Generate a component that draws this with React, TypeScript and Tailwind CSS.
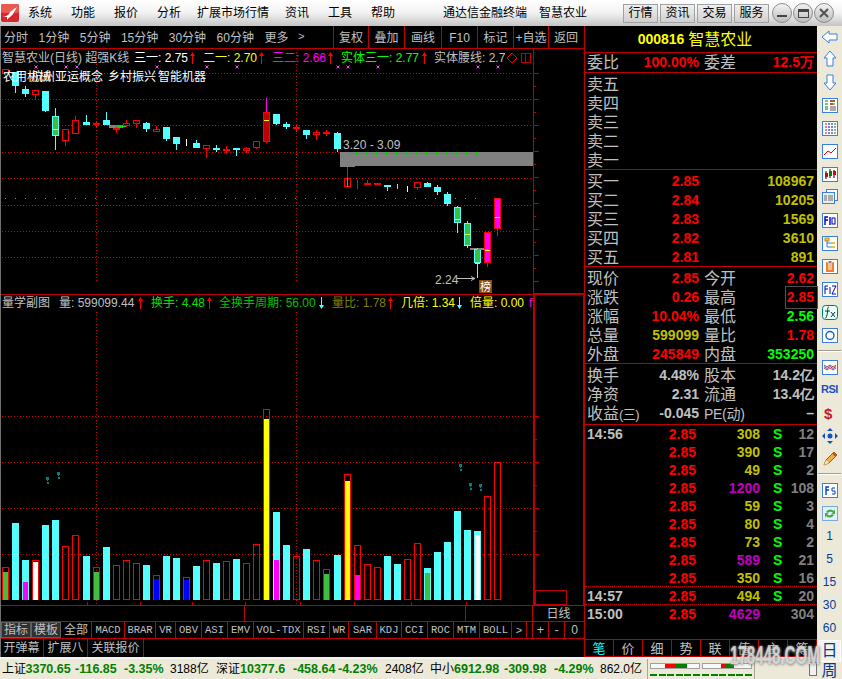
import React from "react";

const RED = "#ff0000";
const LINE = "#c00000";
const CYAN = "#54ffff";

type Candle = [string, number, number, number?, number?, number?];
// kind, bodyTop, bodyBottom, wickTop, wickBottom, mark
const candles: Candle[] = [
  ["r", 69, 74, 69, 77],
  ["c", 72, 86, 72, 93],
  ["c", 89, 94, 86, 97],
  ["r", 90, 95, 90, 99],
  ["c", 91, 111, 91, 112],
  ["g", 116, 136, 108, 150, 129],
  ["r", 129, 141, 129, 146],
  ["r", 120, 134, 116, 134],
  ["c", 122, 125, 115, 125],
  ["x", 123, 125, 121, 128],
  ["c", 120, 125, 112, 125],
  ["x", 128, 130, 127, 133],
  ["r", 123, 126, 120, 127],
  ["r", 120, 124, 120, 128],
  ["c", 123, 129, 122, 132],
  ["r", 129, 132, 126, 132],
  ["c", 127, 139, 127, 141],
  ["c", 137, 144, 137, 150],
  ["w", 143, 144, 139, 146],
  ["c", 143, 148, 140, 148],
  ["r", 145, 149, 145, 158],
  ["c", 148, 150, 145, 152],
  ["x", 149, 151, 146, 154],
  ["c", 148, 150, 148, 156],
  ["r", 148, 151, 147, 153],
  ["r", 141, 148, 141, 149],
  ["d", 112, 142, 98, 143, 120],
  ["c", 114, 124, 114, 125],
  ["c", 124, 127, 122, 129],
  ["x", 127, 129, 124, 132],
  ["c", 130, 135, 130, 139],
  ["r", 132, 135, 130, 140],
  ["x", 132, 134, 130, 136],
  ["c", 133, 149, 132, 152],
  ["r", 178, 187, 167, 187],
  ["x", 182, 183, 180, 189],
  ["r", 183, 185, 180, 185],
  ["r", 183, 185, 183, 185],
  ["c", 185, 187, 185, 191],
  ["c", 186, 187, 184, 189],
  ["w", 187, 188, 186, 192],
  ["r", 182, 188, 182, 190],
  ["c", 183, 187, 182, 187],
  ["c", 187, 192, 185, 195],
  ["c", 194, 204, 192, 206],
  ["g", 207, 223, 206, 233, 219],
  ["g", 223, 246, 221, 248, 234],
  ["g", 249, 263, 248, 278, 263],
  ["m", 232, 263, 232, 267, 250],
  ["m", 198, 229, 198, 236, 217],
];

// kind, top, innerTop, innerColor
type Bar = [string, number, number?, string?];
const bars: Bar[] = [
  ["r", 567, 572, "#3fbf3f"], ["c", 523], ["c", 560, 582, "#ff00ff"], ["r", 560, 562, "#ffffff"], ["c", 525], ["c", 520],
  ["r", 546], ["r", 535], ["c", 556], ["r", 567, 572, "#3fbf3f"], ["c", 547], ["r", 565], ["r", 560], ["r", 563],
  ["c", 565], ["r", 575, 579, "#0000ff"], ["c", 556], ["c", 558], ["r", 577, 580, "#0000ff"], ["c", 566], ["r", 560],
  ["c", 563], ["r", 561], ["c", 559], ["r", 563], ["r", 544], ["r", 409, 419, "#ffff00"], ["c", 512, 560, "#ff00ff"],
  ["c", 545], ["r", 556], ["c", 549], ["r", 560], ["r", 569, 574, "#3fbf3f"], ["c", 555], ["r", 474, 481, "#ffff00"],
  ["r", 545, 575, "#ff00ff"], ["r", 564], ["r", 567], ["c", 556], ["c", 564], ["r", 559], ["r", 543],
  ["c", 568, 573, "#3fbf3f"], ["c", 552], ["c", 542], ["c", 511], ["c", 530], ["c", 531, 535, "#ffffff"], ["r", 496], ["r", 462],
];

const cx = (i: number) => Math.floor(5.7 + 10.04 * i);

function Chart() {
  const hDots = [73, 99, 125, 152, 178, 205, 231, 257, 416, 462, 508, 554];
  const xMarks = [36, 66, 77, 157, 207, 237, 338, 348, 378, 478, 498];
  const upperTicks = Array.from({ length: 17 }, (_, k) => 73 + k * 13);
  const lowerTicks = Array.from({ length: 7 }, (_, k) => 416 + k * 23);
  return (
    <svg width={585} height={556} viewBox="0 49 585 556" className="block" shapeRendering="crispEdges">
      {hDots.map((y) => (
        <line key={y} x1={2} x2={533} y1={y + 0.5} y2={y + 0.5} stroke="#d80000" strokeDasharray="1 2" />
      ))}
      {[96, 296].map((x) => (
        <g key={x}>
          <line x1={x + 0.5} x2={x + 0.5} y1={52} y2={283} stroke="#d80000" strokeDasharray="1 2" />
          <line x1={x + 0.5} x2={x + 0.5} y1={312} y2={604} stroke="#d80000" strokeDasharray="1 2" />
        </g>
      ))}
      {Array.from({ length: 48 }, (_, k) => (
        <rect key={k} x={5 + k * 10} y={198} width={1} height={1} fill="#e06a4a" />
      ))}
      {/* grey band */}
      <rect x={340} y={152} width={193} height={14} fill="#808080" />
      <rect x={340} y={166} width={15} height={1} fill="#808080" />
      <rect x={470} y={248} width={18} height={2} fill="#808080" />
      <rect x={109} y={125} width={14} height={3} fill="#808080" />
      <rect x={348} y={153} width={129} height={1} fill="#00d000" />
      {Array.from({ length: 13 }, (_, k) => (
        <rect key={k} x={356 + k * 10} y={152} width={1} height={3} fill="#00d000" />
      ))}
      <rect x={117} y={126} width={10} height={1} fill="#00e000" />
      {candles.map(([k, t, b, wt, wb, m], i) => {
        const c = cx(i);
        const wick = k === "c" || k === "g" ? CYAN : k === "w" ? "#fff" : RED;
        const fill =
          k === "c" ? CYAN : k === "g" ? "#3fbf3f" : k === "m" ? "#ff00ff" : k === "d" ? "#c00000" : k === "x" ? RED : k === "w" ? "#fff" : "#000";
        const stroke = k === "g" ? CYAN : k === "c" ? CYAN : k === "w" ? "#fff" : RED;
        return (
          <g key={i}>
            <rect x={c} y={wt} width={1} height={(wb as number) - (wt as number)} fill={wick} />
            {k === "d" && <rect x={c} y={wt} width={1} height={t - (wt as number)} fill="#ff00ff" />}
            <rect x={c - 3 + 0.5} y={t + 0.5} width={6} height={Math.max(b - t - 1, 0)} fill={fill} stroke={stroke} />
            {m !== undefined && <rect x={c - 2} y={m} width={5} height={1} fill="#ffff00" />}
          </g>
        );
      })}
      <rect x={347} y={178} width={1} height={9} fill="#00e000" />
      <rect x={477} y={249} width={11} height={1} fill="#00e000" />
      {xMarks.map((x) => (
        <path key={x} d={`M${x - 1.5} 65.5l3 3m0 -3l-3 3`} stroke="#ff40ff" fill="none" shapeRendering="auto" />
      ))}
      <text x={343} y={149} fill="#c0c0c0" fontSize={12} fontFamily="Liberation Sans" shapeRendering="auto">3.20 - 3.09</text>
      <text x={435} y={284} fill="#c0c0c0" fontSize={12} fontFamily="Liberation Sans">2.24</text>
      <path d="M457 278.5h18m-4 -2l4 2l-4 2" stroke="#c0c0c0" fill="none" shapeRendering="auto" />
      <rect x={479} y={280} width={13} height={13} fill="#8b4a14" />
      <text x={480} y={291} fill="#fff" fontSize={11} fontFamily="Noto Sans CJK SC">榜</text>

      {/* divider and side axis */}
      <rect x={0} y={294} width={585} height={1} fill={LINE} />
      <rect x={533} y={49} width={1} height={246} fill={LINE} />
      <rect x={533} y={295} width={2} height={310} fill={LINE} />
      <rect x={534} y={293} width={51} height={2} fill={LINE} />
      <rect x={583} y={295} width={1} height={310} fill={LINE} />
      {upperTicks.map((y, k) => (
        <rect key={y} x={534} y={y} width={k % 2 ? 2 : 5} height={1} fill={LINE} />
      ))}
      {lowerTicks.map((y, k) => (
        <rect key={y} x={535} y={y} width={k % 2 ? 2 : 4} height={1} fill={LINE} />
      ))}
      <rect x={535.5} y={590.5} width={31} height={14} fill="none" stroke={LINE} />

      {/* volume */}
      {bars.map(([k, t, it, ic], i) => {
        const c = cx(i);
        return (
          <g key={i}>
            {k === "c" ? (
              <rect x={c - 3} y={t} width={7} height={600 - t} fill={CYAN} />
            ) : (
              <rect x={c - 2.5} y={t + 0.5} width={6} height={599 - t} fill="none" stroke={RED} />
            )}
            {it !== undefined && <rect x={c - 2} y={it} width={5} height={600 - it} fill={ic} />}
          </g>
        );
      })}
      {[[47, 477], [58, 472], [460, 464], [470, 483], [480, 484]].map(([x, y]) => (
        <g key={x} fill="#008080">
          <rect x={x - 1} y={y} width={3} height={3} />
          <rect x={x} y={y + 3} width={1} height={1} />
          <rect x={x - 0} y={y + 5} width={2} height={2} />
        </g>
      ))}
      {[87, 140, 192, 245, 300, 354, 411, 466].map((x) => (
        <rect key={x} x={x} y={602} width={1} height={3} fill={LINE} />
      ))}
    </svg>
  );
}

function Arrow({ up, c }: { up?: boolean; c: string }) {
  return (
    <svg width={7} height={14} viewBox="0 0 7 14" className="shrink-0">
      {up ? (
        <path d="M3.5 1L6 5H4V13H3V5H1Z" fill={c} />
      ) : (
        <path d="M3.5 13L6 9H4V1H3V9H1Z" fill={c} />
      )}
    </svg>
  );
}

function HCell({ c, w, children }: { c: string; w: number; children: React.ReactNode }) {
  return (
    <span className="shrink-0" style={{ color: c, width: w }}>
      {children}
    </span>
  );
}

function HArrow({ c, up, w }: { c: string; up?: boolean; w: number }) {
  return (
    <span className="shrink-0" style={{ width: w }}>
      <Arrow up={up} c={c} />
    </span>
  );
}

function ChartHeader() {
  return (
    <div className="absolute left-0 top-[1px] flex h-[15px] items-center whitespace-nowrap text-[12px] leading-none">
      <span className="ml-[2px] w-[132px] shrink-0 text-[#c0c0c0]">智慧农业(日线) 超强K线</span>
      <HCell c="#ffffff" w={55}>三一: 2.75</HCell>
      <HArrow c={RED} up w={14} />
      <HCell c="#ffff00" w={55}>二一: 2.70</HCell>
      <HArrow c={RED} up w={14} />
      <HCell c="#ff00ff" w={55}>三二: 2.66</HCell>
      <HArrow c={RED} up w={14} />
      <HCell c="#00ff00" w={80}>实体三一: 2.77</HCell>
      <HArrow c={RED} up w={13} />
      <HCell c="#c0c0c0" w={72}>实体腰线: 2.7</HCell>
      <svg width={12} height={12} viewBox="0 0 12 12" className="shrink-0">
        <path d="M6 1L11 6L6 11L1 6Z" fill="none" stroke={RED} />
      </svg>
      <span className="ml-[3px] flex h-[10px] w-[10px] shrink-0 border border-[#c00000]">
        <span className="ml-[3px] h-full w-[1px] bg-[#c00000]" />
      </span>
    </div>
  );
}

function SubHeader() {
  return (
    <div className="absolute left-0 top-[246px] flex h-[15px] items-center whitespace-nowrap text-[12px] leading-none">
      <span className="ml-[2px] w-[57px] shrink-0 text-[#c0c0c0]">量学副图</span>
      <HCell c="#c0c0c0" w={78}>量: 599099.44</HCell>
      <HArrow c={RED} up w={14} />
      <HCell c="#00e000" w={55}>换手: 4.48</HCell>
      <HArrow c={RED} up w={13} />
      <HCell c="#00c000" w={99}>全换手周期: 56.00</HCell>
      <HArrow c={CYAN} w={14} />
      <HCell c="#808000" w={55}>量比: 1.78</HCell>
      <HArrow c={RED} up w={14} />
      <HCell c="#ffff00" w={55}>几倍: 1.34</HCell>
      <HArrow c={CYAN} w={14} />
      <HCell c="#ffff00" w={59}>倍量: 0.00</HCell>
      <span className="text-[#ff00ff]">f</span>
    </div>
  );
}

function Concepts() {
  return (
    <div className="absolute left-0 top-[21px] h-[15px] w-[533px] text-[12px] leading-[15px] text-white">
      <span className="absolute left-[3px] whitespace-nowrap">农用机械</span>
      <span className="absolute left-[31px] whitespace-nowrap">杭州亚运概念</span>
      <span className="absolute left-[108px] whitespace-nowrap">乡村振兴</span>
      <span className="absolute left-[158px] whitespace-nowrap">智能机器</span>
    </div>
  );
}

const periods = ["分时", "1分钟", "5分钟", "15分钟", "30分钟", "60分钟", "更多"];
const toolBtns: [string, number][] = [
  ["复权", 35], ["叠加", 36], ["画线", 37], ["F10", 36], ["标记", 36], ["+自选", 35], ["返回", 35],
];

function Toolbar() {
  return (
    <div className="flex h-[23px] shrink-0 border-b border-[#c00000] text-[12px] text-[#c0c0c0]">
      <div className="flex w-[333px] items-center gap-[10.5px] pl-[4px] pt-[1px] whitespace-nowrap">
        {periods.map((p) => <span key={p}>{p}</span>)}
        <span className="ml-[-1px] font-['Liberation_Mono',monospace] text-[11px]">&gt;</span>
      </div>
      {toolBtns.map(([t, w]) => (
        <div key={t} className="flex items-center justify-center border-l border-[#c00000] pt-[1px]" style={{ width: w }}>
          {t}
        </div>
      ))}
    </div>
  );
}

const tabs: [string, number][] = [
  ["全部", 31], ["MACD", 33], ["BRAR", 31], ["VR", 20], ["OBV", 26], ["ASI", 26], ["EMV", 26], ["VOL-TDX", 50], ["RSI", 26],
  ["WR", 19], ["SAR", 28], ["KDJ", 25], ["CCI", 26], ["ROC", 26], ["MTM", 26], ["BOLL", 32],
];

function BottomRows() {
  return (
    <div className="flex shrink-0 flex-col text-[#c0c0c0]">
      <div className="flex h-[17px] border-y border-[#c00000]">
        <div className="w-[245px] border-r border-[#c00000]" />
        <div className="w-[221px] border-r border-[#c00000]" />
        <div className="w-[67px] border-r border-[#c00000]" />
        <div className="flex flex-1 items-center justify-center text-[12px]">日线</div>
      </div>
      <div className="flex h-[17px] items-stretch border-b border-[#c00000] text-[12.5px] leading-none">
        <div className="ml-[1px] flex w-[30px] items-center justify-center border border-[#606060] bg-[#303030] text-[12px]">指标</div>
        <div className="flex w-[30px] items-center justify-center border border-[#606060] bg-[#303030] text-[12px]">模板</div>
        {tabs.map(([t, w]) => (
          <div
            key={t}
            className={`flex items-center justify-center border-r border-[#c00000] ${t === "全部" ? "text-[12px]" : "font-['Liberation_Mono',monospace] text-[10.5px]"}`}
            style={{ width: w }}
          >
            {t}
          </div>
        ))}
        <div className="flex w-[15px] items-center justify-center border-r border-[#c00000] text-[11px]">&gt;</div>
        <div className="w-[6px] border-r border-[#c00000]" />
        <div className="flex w-[16px] items-center justify-center border-r border-[#c00000]">+</div>
        <div className="flex w-[16px] items-center justify-center border-r border-[#c00000]">-</div>
        <div className="flex flex-1 items-center justify-center text-[12px]">0</div>
      </div>
      <div className="flex h-[18px] text-[12px]">
        {[["开弹幕", 44], ["扩展八", 44], ["关联报价", 56]].map(([t, w]) => (
          <div key={t as string} className="flex items-center justify-center border-r border-[#c00000]" style={{ width: w as number }}>
            {t}
          </div>
        ))}
      </div>
    </div>
  );
}

const num = "font-['Liberation_Sans',sans-serif] text-[14px] font-bold";
const label = "text-[16px] text-[#c0c0c0] leading-none";
const olive = "#c0c000";

function Depth({ rows }: { rows: [string, string?, string?][] }) {
  return (
    <div className="flex h-[97px] shrink-0 flex-col border-b border-[#c00000] pt-[2px]">
      {rows.map(([l, p, v]) => (
        <div key={l} className="flex h-[19px] shrink-0 items-center">
          <span className={`${label} w-[49px] pl-[2px]`}>{l}</span>
          <span className={`${num} w-[65px] text-right text-[#ff0000]`}>{p}</span>
          <span className={`${num} flex-1 pr-[3px] text-right`} style={{ color: olive }}>{v}</span>
        </div>
      ))}
    </div>
  );
}

type Q = [React.ReactNode, string, string, React.ReactNode, string, string];
const quote: Q[] = [
  ["现价", "2.85", RED, "今开", "2.62", RED],
  ["涨跌", "0.26", RED, "最高", "2.85", RED],
  ["涨幅", "10.04%", RED, "最低", "2.56", "#00ff00"],
  ["总量", "599099", olive, "量比", "1.78", RED],
  ["外盘", "245849", RED, "内盘", "353250", "#00ff00"],
];
const extra: Q[] = [
  ["换手", "4.48%", "#c0c0c0", "股本", "14.2亿", "#c0c0c0"],
  ["净资", "2.31", "#c0c0c0", "流通", "13.4亿", "#c0c0c0"],
  [
    <>收益<span className="text-[13px] tracking-[-0.5px]">(三)</span></>,
    "-0.045",
    "#c0c0c0",
    <span className="text-[14px] tracking-[-0.3px]">PE(动)</span>,
    "–",
    "#c0c0c0",
  ],
];

function QRow({ q }: { q: Q }) {
  const [a, b, bc, d, e, ec] = q;
  return (
    <div className="flex h-[19px] shrink-0 items-center">
      <span className={`${label} w-[62px] whitespace-nowrap pl-[2px]`}>{a}</span>
      <span className={`${num} w-[52px] text-right`} style={{ color: bc }}>{b}</span>
      <span className={`${label} ml-[5px] w-[48px] whitespace-nowrap`}>{d}</span>
      <span className={`${num} flex-1 text-right`}>
        <span
          className={`relative inline-block whitespace-nowrap pr-[3px] ${d === "最高" ? "outline outline-1 outline-[#505050] outline-offset-[0px] pl-[1px]" : ""}`}
          style={{ color: ec }}
        >
          {e}
        </span>
      </span>
    </div>
  );
}

const ticks: [string, string, string, string, string][] = [
  ["14:56", "308", olive, "S", "12"],
  ["", "390", olive, "S", "17"],
  ["", "49", olive, "S", "2"],
  ["", "1200", "#c000c0", "S", "108"],
  ["", "59", olive, "S", "3"],
  ["", "80", olive, "S", "4"],
  ["", "73", olive, "S", "2"],
  ["", "589", "#c000c0", "S", "21"],
  ["", "350", olive, "S", "16"],
  ["14:57", "494", olive, "S", "20"],
  ["15:00", "4629", "#c000c0", "", "304"],
];

function Ticks() {
  return (
    <div className="flex shrink-0 flex-col">
      {ticks.map(([t, v, vc, s, n], i) => (
        <div
          key={i}
          className={`flex h-[18px] items-center pt-[1px] ${i === 8 || i === 9 ? "border-b border-dotted border-[#c00000]" : ""}`}
        >
          <span className={`${num} w-[47px] pl-[2px] text-[#c0c0c0]`}>{t}</span>
          <span className={`${num} w-[64px] text-right text-[#ff0000]`}>2.85</span>
          <span className={`${num} w-[64px] text-right`} style={{ color: vc }}>{v}</span>
          <span className={`${num} ml-[13px] w-[11px] text-[#00ff00]`}>{s}</span>
          <span className={`${num} flex-1 pr-[3px] text-right text-[#808080]`}>{n}</span>
        </div>
      ))}
    </div>
  );
}

function RightPanel() {
  return (
    <div className="flex w-[232px] shrink-0 flex-col">
      <div className="flex h-[27px] shrink-0 items-center justify-center gap-[4px] border-b border-[#c00000] pr-[12px] pt-[1px] text-[#ffff00]">
        <span className={num}>000816</span>
        <span className="text-[16px] leading-none">智慧农业</span>
      </div>
      <div className="flex h-[20px] shrink-0 items-center border-b border-[#c00000]">
        <span className={`${label} w-[58px] pl-[2px]`}>委比</span>
        <span className={`${num} w-[56px] text-right text-[#ff0000]`}>100.00%</span>
        <span className={`${label} ml-[5px]`}>委差</span>
        <span className={`${num} flex-1 pr-[3px] text-right text-[#ff0000]`}>12.5万</span>
      </div>
      <Depth rows={[["卖五"], ["卖四"], ["卖三"], ["卖二"], ["卖一"]]} />
      <Depth
        rows={[
          ["买一", "2.85", "108967"],
          ["买二", "2.84", "10205"],
          ["买三", "2.83", "1569"],
          ["买四", "2.82", "3610"],
          ["买五", "2.81", "891"],
        ]}
      />
      <div className="flex h-[97px] shrink-0 flex-col border-b border-[#c00000] pt-[2px]">
        {quote.map((q, i) => <QRow key={i} q={q} />)}
      </div>
      <div className="flex h-[61px] shrink-0 flex-col border-b border-[#c00000] pt-[2px]">
        {extra.map((q, i) => <QRow key={i} q={q} />)}
      </div>
      <Ticks />
      <div className="flex-1" />
      <div className="flex h-[18px] shrink-0 border-y border-[#c00000] text-[13px] leading-none text-[#c0c0c0]">
        {["笔", "价", "细", "势", "联", "值", "主", "筹"].map((t, i) => (
          <div
            key={t}
            className={`flex flex-1 items-center justify-center border-r border-[#c00000] ${i === 0 ? "text-[#00ffff]" : ""}`}
          >
            {t}
          </div>
        ))}
      </div>
    </div>
  );
}

function Box({ children }: { children: React.ReactNode }) {
  return (
    <svg width={18} height={18} viewBox="0 0 18 18" className="block">
      {children}
    </svg>
  );
}

const frame = <rect x={1.5} y={2.5} width={15} height={14} fill="#fff" stroke="#3a7ee0" />;

const sideIcons: React.ReactNode[] = [
  <Box><path d="M1 9L8 3V6H16V12H8V15Z" fill="#fff" stroke="#3a7ee0" /></Box>,
  <Box><path d="M9 1L15 8H12V16H6V8H3Z" fill="#fff" stroke="#3a7ee0" /></Box>,
  <Box><path d="M9 17L15 10H12V2H6V10H3Z" fill="#fff" stroke="#3a7ee0" /></Box>,
  <Box>{frame}<path d="M4 5h3M9 5h5M4 8h3M9 8h5" stroke="#007a00" /><path d="M9 5h5M9 8h3" stroke="#d00000" /><rect x={9} y={10} width={6} height={5} fill="#aaa" /><path d="M4 11h3M4 13h3" stroke="#007a00" /></Box>,
  <Box>{frame}{[4, 7, 10, 13].map((x, k) => <path key={x} d={`M${x} 5h2M${x} 8h2M${x} 11h2M${x} 14h2`} stroke={["#d00000", "#0000c0", "#0000c0", "#008000"][k]} />)}</Box>,
  <Box>{frame}<path d="M3 13L7 9L10 11L15 6" stroke="#e00000" fill="none" /></Box>,
  <Box>{frame}<path d="M5 6v8M9 4v9M13 5v8" stroke="#000" /><rect x={4} y={8} width={3} height={4} fill="#e00000" /><rect x={8} y={6} width={3} height={5} fill="#008000" /><rect x={12} y={6} width={3} height={4} fill="#e00000" /></Box>,
  <Box><rect x={5.5} y={1.5} width={11} height={11} fill="#fff" stroke="#3a7ee0" /><rect x={1.5} y={4.5} width={12} height={11} fill="#eee" stroke="#3a7ee0" /><path d="M3 8h3M7 8h5M3 10h3M7 10h5M3 12h3M7 12h5" stroke="#666" /></Box>,
  <Box>{frame}<path d="M4 14V6h3M4 9h3M9 6v8" stroke="#0000c0" fill="none" strokeWidth={1.4} /><rect x={11} y={7} width={3} height={6} fill="none" stroke="#0000c0" /></Box>,
  <Box>{frame}<rect x={4} y={4} width={4} height={3} fill="#f0c040" stroke="#c09020" /><rect x={10} y={8} width={4} height={2} fill="#f0c040" /><rect x={10} y={12} width={4} height={2} fill="#f0c040" /><path d="M6 7v6h4M6 9h4" stroke="#3a7ee0" fill="none" /></Box>,
  <Box>{frame}<rect x={5} y={5} width={8} height={10} fill="#f08030" /><path d="M7 4h4v2H7zM7 8h4M7 10h4M7 12h4" stroke="#fff" /></Box>,
  <Box>{frame}<path d="M4 14V6h3M4 9h3M9 7v7M11 6h4l-4 8h4" stroke="#0000c0" fill="none" /></Box>,
  <Box><rect x={1.5} y={2.5} width={15} height={14} rx={3} fill="#e8fff8" stroke="#007a7a" /><path d="M8 4C6 4 7 8 6 12S4 15 4 15M4 8h5M10 9l4 5M14 9l-4 5" stroke="#003c3c" fill="none" /></Box>,
  <Box>{frame}<circle cx={9} cy={9.5} r={4} fill="none" stroke="#1060c0" strokeWidth={1.4} /></Box>,
];

const sideIcons2: React.ReactNode[] = [
  <Box>{frame}<path d="M3 7l3 2l3-2l3 2l3-2M3 10l3 2l3-2l3 2l3-2" stroke="#c04040" fill="none" /><path d="M3 8.5l3 2l3-2l3 2l3-2" stroke="#4060d0" fill="none" /></Box>,
  <span className="font-['Liberation_Sans',sans-serif] text-[11px] font-bold leading-none tracking-[-0.5px] text-[#2050c0]">RSI</span>,
  <Box><text x={3} y={15} fontSize={15} fontWeight={700} fontFamily="Liberation Sans" fill="#c02020">$</text></Box>,
  <Box><path d="M9 1l3 3H6zM9 17l3-3H6zM1 9l3-3v6zM17 9l-3-3v6z" fill="#1050c0" /><circle cx={9} cy={9} r={2.5} fill="#1050c0" /></Box>,
  <Box><path d="M3 15l2-5l8-8l3 3l-8 8Z" fill="#f0b040" stroke="#a06010" /><path d="M3 15l2-5l3 3Z" fill="#f8e0c0" /><path d="M12 3l3 3" stroke="#d04040" strokeWidth={2} /></Box>,
];

const sideIcons3: React.ReactNode[] = [
  <Box>{frame}<path d="M5 14V6h3M5 9h3" stroke="#0040c0" fill="none" strokeWidth={1.4} /><path d="M14 7h-3v3h3v3h-3" stroke="#0040c0" fill="none" /></Box>,
  <Box><rect x={1.5} y={2.5} width={15} height={14} fill="#e4f0ff" stroke="#7aa8e0" /><path d="M5 8a5 5 0 0 1 8-1l1-2v5h-4l2-1a3 3 0 0 0-5 0zM13 11a5 5 0 0 1-8 1l-1 2V9h4l-2 1a3 3 0 0 0 5 0z" fill="#40b040" /></Box>,
];

function SideItem({ children, h = "h-[23px]" }: { children: React.ReactNode; h?: string }) {
  return <div className={`flex ${h} w-full shrink-0 items-center justify-center`}>{children}</div>;
}

function Sidebar() {
  return (
    <div className="flex w-[25px] shrink-0 flex-col overflow-hidden bg-[#ece9d8] text-[#003c9c]">
      {sideIcons.map((ic, i) => (
        <SideItem key={i} h={i === 0 ? "h-[21px]" : "h-[23px]"}>{ic}</SideItem>
      ))}
      <div className="flex h-[9px] shrink-0 items-center px-[1px]"><div className="h-[2px] w-full border-b border-white bg-[#a0a090]" /></div>
      {sideIcons2.map((ic, i) => <SideItem key={i}>{ic}</SideItem>)}
      <div className="flex h-[8px] shrink-0 items-center px-[1px]"><div className="h-[2px] w-full border-b border-white bg-[#a0a090]" /></div>
      {sideIcons3.map((ic, i) => <SideItem key={i}>{ic}</SideItem>)}
      {["1", "5", "15", "30", "60"].map((t) => (
        <SideItem key={t}><span className="text-[12px] leading-none">{t}</span></SideItem>
      ))}
      <div className="mx-[1px] mt-[1px] flex h-[22px] shrink-0 items-center justify-center border border-[#ffffff] bg-[#f4f2e8] text-[16px] leading-none">日</div>
      <div className="flex h-[18px] shrink-0 items-center justify-center text-[16px] leading-none">周</div>
    </div>
  );
}

function Logo() {
  return (
    <svg width={18} height={18} viewBox="0 0 18 18" className="shrink-0">
      <rect width={18} height={18} rx={2} fill="#d8262a" />
      <rect width={18} height={9} rx={2} fill="#e85a50" />
      <path d="M2 13C6 12 8 11 9 8L13 5L16 3L12 10C11 12 8 13 6 16L6 13Z" fill="#fff" />
    </svg>
  );
}

function WinBtn({ children }: { children: React.ReactNode }) {
  return (
    <div className="flex h-[20px] w-[20px] items-center justify-center rounded-full border border-[#8c8c8c] bg-linear-to-b from-[#f4f4f4] to-[#bcbcbc]">
      {children}
    </div>
  );
}

const menus: [string, number][] = [
  ["系统", 43], ["功能", 43], ["报价", 43], ["分析", 40], ["扩展市场行情", 88], ["资讯", 43], ["工具", 43], ["帮助", 72],
];

function TitleBar() {
  return (
    <div className="flex h-[26px] shrink-0 items-center bg-linear-to-b from-white via-[#f2f2f2] to-[#c4c4c4] text-[12px] text-black">
      <div className="ml-[1px] mr-[9px]"><Logo /></div>
      {menus.map(([m, w]) => (
        <span key={m} className="whitespace-nowrap" style={{ width: w }}>{m}</span>
      ))}
      <span className="w-[96px] whitespace-nowrap">通达信金融终端</span>
      <span className="w-[84px] whitespace-nowrap">智慧农业</span>
      <div className="flex gap-[2px]">
        {["行情", "资讯", "交易", "服务"].map((b) => (
          <div key={b} className="flex h-[19px] w-[35px] items-center justify-center border border-[#a0a0a0] bg-linear-to-b from-[#f0f0f0] to-[#cfcfcf]">
            {b}
          </div>
        ))}
      </div>
      <div className="ml-[3px] flex gap-[1px]">
        <WinBtn><span className="mt-[5px] h-[2px] w-[10px] bg-[#444]" /></WinBtn>
        <WinBtn><span className="h-[9px] w-[11px] border border-t-[3px] border-[#444]" /></WinBtn>
        <WinBtn>
          <svg width={10} height={10} viewBox="0 0 10 10"><path d="M1 1L9 9M9 1L1 9" stroke="#555" strokeWidth={2.2} /></svg>
        </WinBtn>
      </div>
    </div>
  );
}

const green = "#008000";
const statusCells: [string, number, string, boolean][] = [
  ["上证", 23.5, "#000", false], ["3370.65", 49.5, green, true], ["-116.85", 49, green, true], ["-3.35%", 46, green, true], ["3188亿", 46, "#000", false],
  ["深证", 24, "#000", false], ["10377.6", 53, green, true], ["-458.64", 45, green, true], ["-4.23%", 47, green, true], ["2408亿", 45, "#000", false],
  ["中小", 24, "#000", false], ["6912.98", 50, green, true], ["-309.98", 50, green, true], ["-4.29%", 46, green, true], ["862.0亿", 47, "#000", false],
];

function Meter({ r, g }: { r: [number, number]; g: [number, number] }) {
  return (
    <div className="flex flex-col gap-[3px]">
      <div className="relative h-[6px] w-[50px] border border-[#a0a0a0] bg-[#f8f8f8]">
        <div className="absolute top-0 h-full bg-[#ff0000]" style={{ left: r[0], width: r[1] }} />
        <div className="absolute top-0 h-full bg-[#008000]" style={{ left: g[0], width: g[1] }} />
      </div>
      <div className="flex justify-between">
        {[0, 1, 2, 3, 4, 5].map((k) => <span key={k} className="h-[4px] w-[7px] border-b-2 border-[#008000]" />)}
      </div>
    </div>
  );
}

function StatusBar() {
  return (
    <div className="flex h-[22px] shrink-0 items-center border-t-2 border-[#f4f4f0] bg-[#ece9d8] text-[12px] leading-none text-black">
      <div className="ml-[2px] flex w-[645px] shrink-0 items-center">
        {statusCells.map(([t, w, c, b], i) => (
          <span key={i} className={`whitespace-nowrap ${b ? "text-[12.5px] font-bold" : ""}`} style={{ width: w, color: c }}>
            {t}
          </span>
        ))}
      </div>
      <div className="flex h-full w-[108px] shrink-0 items-center justify-center gap-[2px] border-x border-[#a8a898]">
        <Meter r={[14, 10]} g={[24, 12]} />
        <Meter r={[18, 5]} g={[23, 8]} />
      </div>
      <div className="flex flex-1 justify-end">
        <span className="h-[14px] w-[8px] border border-[#707070] bg-[#f0f0f0]" />
      </div>
    </div>
  );
}

export default function App() {
  return (
    <div className="relative flex h-[679px] w-[842px] flex-col overflow-hidden bg-black font-['Liberation_Sans','Noto_Sans_CJK_SC',sans-serif]">
      <TitleBar />
      <div className="flex min-h-0 flex-1">
        <div className="flex w-[817px] shrink-0 flex-col">
          <div className="flex min-h-0 flex-1">
            <div className="flex w-[585px] shrink-0 flex-col border-r border-[#c00000]">
              <Toolbar />
              <div className="relative h-[556px] w-[585px] shrink-0">
                <Chart />
                <ChartHeader />
                <Concepts />
                <SubHeader />
              </div>
              <BottomRows />
            </div>
            <RightPanel />
          </div>
          <StatusBar />
        </div>
        <Sidebar />
      </div>
      <div className="absolute left-0 top-[26px] h-[631px] w-[1px] bg-[#707070]" />
      <div className="absolute left-[730px] top-[642px] origin-left scale-x-[0.58] whitespace-nowrap text-[26px] font-bold leading-none text-[#e4e4e4]/80 [text-shadow:0_0_3px_#9a9a9a,1px_1px_4px_#888888]">
        178448.COM
      </div>
    </div>
  );
}
